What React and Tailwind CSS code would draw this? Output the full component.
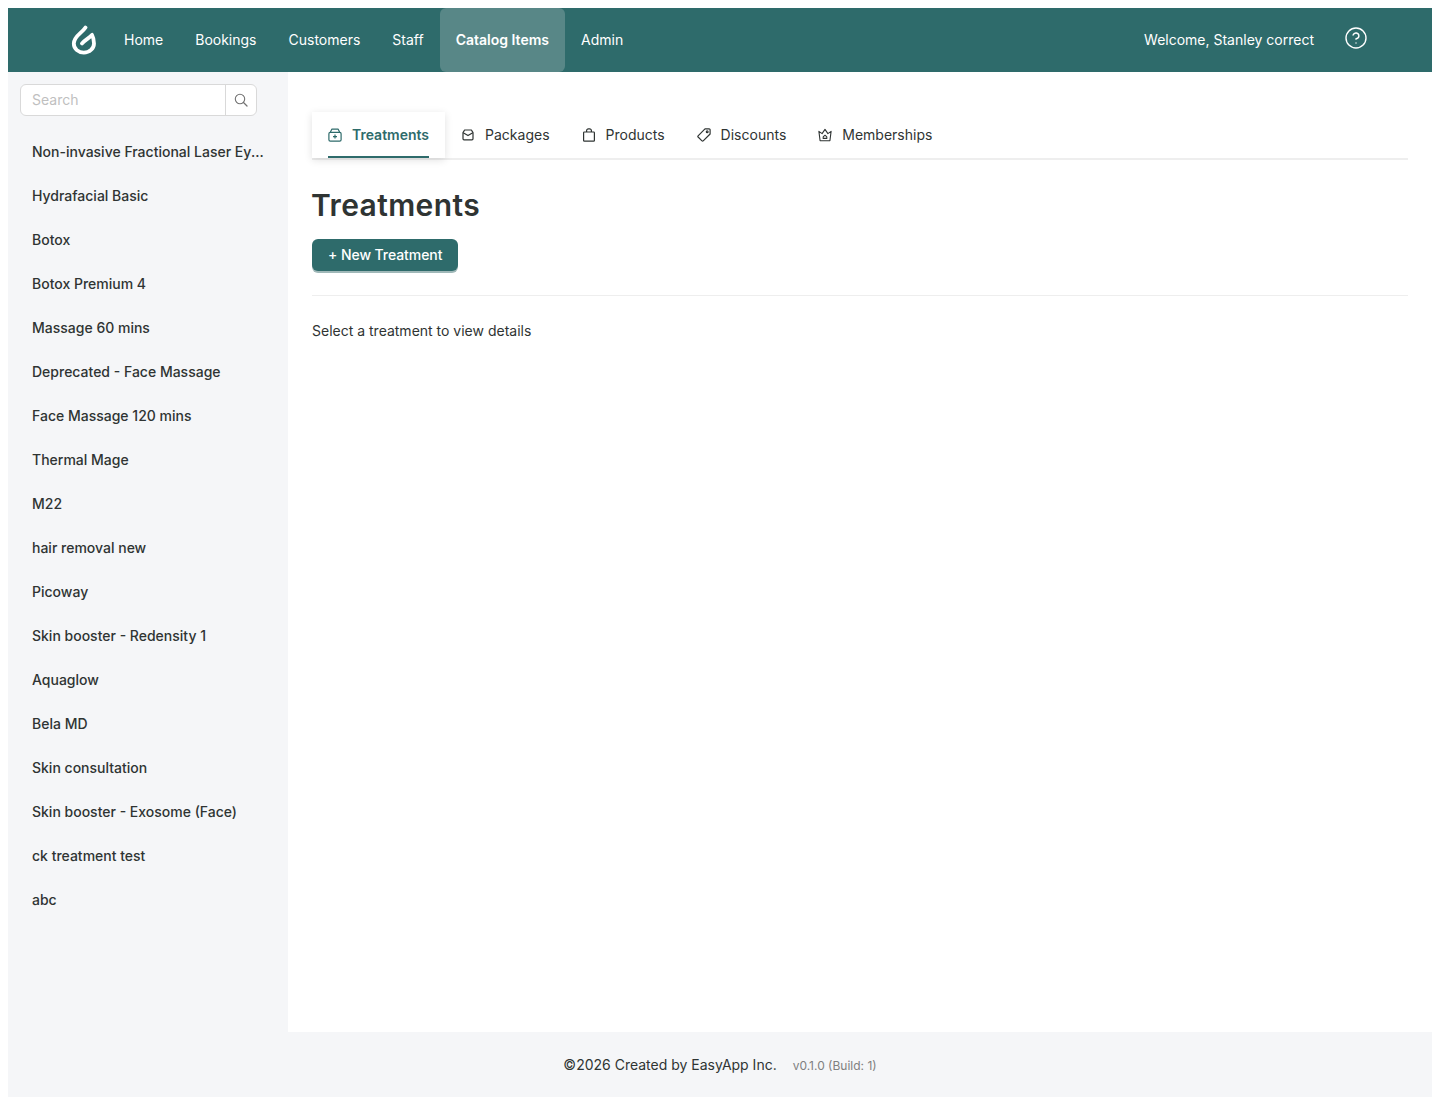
import { CircleHelp } from "lucide-react";

const NAV_ITEMS = ["Home", "Bookings", "Customers", "Staff", "Catalog Items", "Admin"];

const TREATMENTS = [
  "Non-invasive Fractional Laser Eye Treatment",
  "Hydrafacial Basic",
  "Botox",
  "Botox Premium 4",
  "Massage 60 mins",
  "Deprecated - Face Massage",
  "Face Massage 120 mins",
  "Thermal Mage",
  "M22",
  "hair removal new",
  "Picoway",
  "Skin booster - Redensity 1",
  "Aquaglow",
  "Bela MD",
  "Skin consultation",
  "Skin booster - Exosome (Face)",
  "ck treatment test",
  "abc",
];

const Logo = () => (
  <svg width="26" height="30" viewBox="0 0 26 30" fill="none">
    <path
      d="M14.5 2.5 C11 8 2.8 11 2.8 18.5 C2.8 24 7.5 27.6 12.8 27.6 C18.5 27.6 23 23.5 23 18.5 C23 15 22.2 12 21 9.8 C18.5 13 14.5 14.5 11 18.4"
      stroke="#fff"
      strokeWidth="3.8"
      strokeLinecap="round"
      strokeLinejoin="round"
    />
  </svg>
);

const SearchIcon = () => (
  <svg width="14" height="14" viewBox="0 0 14 14" fill="none" stroke="currentColor" strokeWidth="1.1">
    <circle cx="6" cy="6" r="4.7" />
    <path d="M9.5 9.5 L13 13" strokeLinecap="round" strokeWidth="1.3" />
  </svg>
);

const TreatmentIcon = () => (
  <svg width="14" height="14" viewBox="0 0 14 14" fill="none" stroke="currentColor" strokeWidth="1.2">
    <path d="M2.2 4.4 L3.8 1.2 H10.2 L11.8 4.4" strokeLinejoin="round" />
    <rect x="0.9" y="4.4" width="12.2" height="8.8" rx="1.4" />
    <path d="M7 6.6 V10.6 M5 8.6 H9" />
  </svg>
);

const PackageIcon = () => (
  <svg width="14" height="14" viewBox="0 0 14 14" fill="none" stroke="currentColor" strokeWidth="1.2">
    <path d="M3.6 2 H10.4 L12 4.6 V10.8 A1 1 0 0 1 11 11.8 H3 A1 1 0 0 1 2 10.8 V4.6 Z" strokeLinejoin="round" />
    <path d="M2.2 4.8 L7 7.6 L11.8 4.8" strokeLinejoin="round" />
  </svg>
);

const ProductIcon = () => (
  <svg width="14" height="14" viewBox="0 0 14 14" fill="none" stroke="currentColor" strokeWidth="1.2">
    <rect x="1.6" y="4" width="10.8" height="9.2" rx="0.8" />
    <path d="M4.6 4 V2.6 A1.8 1.8 0 0 1 6.4 0.8 H7.6 A1.8 1.8 0 0 1 9.4 2.6 V4" />
  </svg>
);

const TagIcon = () => (
  <svg width="14" height="14" viewBox="0 0 14 14" fill="none" stroke="currentColor" strokeWidth="1.2">
    <path d="M8 0.9 H12.2 A0.9 0.9 0 0 1 13.1 1.8 V6 L6.2 12.9 A0.9 0.9 0 0 1 5 12.9 L1.1 9 A0.9 0.9 0 0 1 1.1 7.8 Z" strokeLinejoin="round" />
    <circle cx="10.2" cy="3.8" r="0.9" />
  </svg>
);

const CrownIcon = () => (
  <svg width="14" height="14" viewBox="0 0 14 14" fill="none" stroke="currentColor" strokeWidth="1.1">
    <path d="M0.9 3.4 L4.1 5.6 L7 1.4 L9.9 5.6 L13.1 3.4 L11.9 12.8 H2.1 Z" strokeLinejoin="round" />
    <path d="M5.2 8.8 L7 7.2 L8.8 8.8 V10.4 H5.2 Z" strokeLinejoin="round" />
  </svg>
);

const TABS = [
  { label: "Treatments", icon: <TreatmentIcon />, active: true },
  { label: "Packages", icon: <PackageIcon /> },
  { label: "Products", icon: <ProductIcon /> },
  { label: "Discounts", icon: <TagIcon /> },
  { label: "Memberships", icon: <CrownIcon /> },
];

const App = () => {
  return (
    <div
      className="bg-white p-2 text-sm text-[#2f3433]"
      style={{ fontFamily: "Inter, 'Liberation Sans', sans-serif" }}
    >
      <header className="flex h-16 items-center justify-between bg-[#2e6b6b] pl-[60px] pr-[64px] text-white">
        <div className="flex h-full items-center">
          <div className="mr-[9px] flex w-[31px] justify-center">
            <Logo />
          </div>
          {NAV_ITEMS.map(item => (
            <a
              key={item}
              className={`flex h-full items-center rounded-md px-4 ${
                item === "Catalog Items" ? "bg-[#588787] font-semibold" : "font-normal"
              }`}
            >
              {item}
            </a>
          ))}
        </div>
        <div className="flex items-center gap-[30px]">
          <span className="font-normal">Welcome, Stanley correct</span>
          <CircleHelp size={24} strokeWidth={1.4} className="-translate-y-0.5" />
        </div>
      </header>

      <div className="flex h-[1025px]">
        <aside className="flex w-[280px] shrink-0 flex-col bg-[#f5f6f8] px-3 pt-3">
          <div className="flex h-8 w-[237px] overflow-hidden rounded-md border border-[#d9d9d9] bg-white">
            <input
              placeholder="Search"
              className="min-w-0 flex-1 px-[11px] text-sm outline-none placeholder:text-[#bfbfbf]"
            />
            <span className="flex w-[31px] items-center justify-center border-l border-[#d9d9d9] text-[#737373]">
              <SearchIcon />
            </span>
          </div>
          <ul className="mt-[14px] flex flex-col">
            {TREATMENTS.map(name => (
              <li key={name} className="flex h-11 items-center pl-3 font-medium">
                <span className="w-[232px] truncate">{name}</span>
              </li>
            ))}
          </ul>
        </aside>

        <div className="flex min-w-0 flex-1 flex-col">
          <main className="flex-1 bg-white px-6 pt-10">
            <nav className="flex h-[48px] border-b-2 border-[#eeeeee]">
              {TABS.map(tab => (
                <div
                  key={tab.label}
                  className={`relative flex h-[46px] items-center gap-[10px] px-4 ${
                    tab.active
                      ? "bg-white font-semibold text-[#2e6b6b] shadow-[0_2px_8px_rgba(0,0,0,0.12)]"
                      : "font-normal"
                  }`}
                >
                  {tab.icon}
                  <span>{tab.label}</span>
                  {tab.active && <span className="absolute bottom-0 left-4 right-4 h-0.5 bg-[#2e6b6b]" />}
                </div>
              ))}
            </nav>
            <h1 className="-ml-px mt-[23px] text-[30px] font-semibold leading-[44px] tracking-[0.4px] text-[#2f3433]">
              Treatments
            </h1>
            <button className="mt-[12px] block h-[32px] rounded-md bg-[#2e6b6b] px-[16px] font-medium tracking-[-0.07px] text-white shadow-[0_2px_0_#9fb8b8]">
              + New Treatment
            </button>
            <div className="mt-[24px] border-t border-[#eeeeee]" />
            <p className="mt-[24px] leading-[22px]">Select a treatment to view details</p>
          </main>
          <footer className="-ml-[280px] flex h-[65px] items-center justify-center gap-4 bg-[#f5f6f8]">
            <span>©2026 Created by EasyApp Inc.</span>
            <span className="mt-[2px] text-xs text-[#808080]">v0.1.0 (Build: 1)</span>
          </footer>
        </div>
      </div>
    </div>
  );
};

export default App;
